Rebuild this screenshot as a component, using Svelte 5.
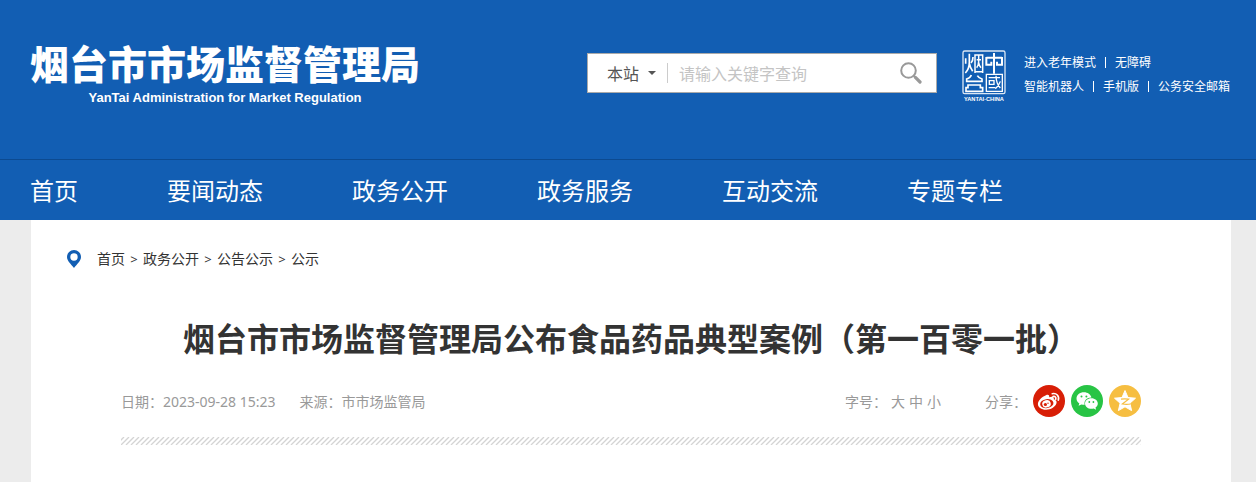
<script>
  const nav = ['首页', '要闻动态', '政务公开', '政务服务', '互动交流', '专题专栏'];
  const crumbs = ['首页', '政务公开', '公告公示', '公示'];
  const tools = [['进入老年模式', '无障碍'], ['智能机器人', '手机版', '公务安全邮箱']];
  const sizes = ['大', '中', '小'];
</script>

<header>
  <div class="top">
    <a class="brand" href="#home">
      <span class="name">烟台市市场监督管理局</span>
      <span class="en">YanTai Administration for Market Regulation</span>
    </a>
    <form class="search" onsubmit={(e) => e.preventDefault()}>
      <select aria-label="搜索范围"><option>本站</option></select>
      <svg class="caret" viewBox="0 0 8 4" aria-hidden="true"><path d="M0 0h8L4 4z" fill="#555" /></svg>
      <input type="text" aria-label="关键字" placeholder="请输入关键字查询" />
      <button type="submit" aria-label="搜索">
        <svg viewBox="0 0 22 22" fill="none" stroke="#999">
          <circle cx="8.5" cy="8.5" r="7.3" stroke-width="2" />
          <path d="M13.8 13.8l1.800 1.800" stroke-width="2" />
          <path d="M15.400 15.400l4.600 4.600" stroke-width="3.200" stroke-linecap="round" />
        </svg>
      </button>
    </form>
    <a class="seal" href="#city" aria-label="烟台">
      <svg viewBox="36 28 132 156" fill="none" stroke="#fff" stroke-width="5">
        <rect x="39" y="31" width="126" height="128" rx="5" stroke-width="4" opacity=".85" />
        <path d="M58 39v26q0 20-12 32M58 68q3 14 10 24M47 53v16M69 49q0 12-6 18" />
        <path d="M75 97V43h23v54M75 93h23M80 57h13M86 45v17q0 12-6 19M86 66q1 9 7 15" stroke-width="4.500" />
        <path d="M64 103q-3 9-14 12v7h46v-7q-10-3-14-10M54 133h37M54 131v10h-6v11h50v-11h-7v-10" />
        <path d="M132 37v62M109 51h47M109 49v23h15v-9M156 49v23h-15v-9" stroke-width="6" />
        <path d="M109 101h48v51h-48zM116 111h34M118 120h14v11h-14zM116 141h20M138 105q1 25 13 37M151 122q-4 13-15 22" stroke-width="4" />
        <text x="102" y="180" text-anchor="middle" fill="#fff" stroke="none" font-family="Liberation Sans, sans-serif" font-weight="bold" font-size="17">YANTAI·CHINA</text>
      </svg>
    </a>
    <div class="tools">
      {#each tools as row}
        <div>
          {#each row as item, i}
            {#if i}<i></i>{/if}<a href="#tool">{item}</a>
          {/each}
        </div>
      {/each}
    </div>
  </div>
  <nav>
    {#each nav as item}<a href="#nav">{item}</a>{/each}
  </nav>
</header>

<main>
  <div class="crumbs">
    <svg viewBox="0 0 14 18" aria-hidden="true"><path fill="#125eb3" fill-rule="evenodd" d="M7 0a7 7 0 0 1 7 7c0 4-4 7-7 11C4 14 0 11 0 7a7 7 0 0 1 7-7zM7 3.300a3.700 3.700 0 1 0 0 7.400a3.700 3.700 0 0 0 0-7.400z" /></svg>
    {#each crumbs as item, i}
      {#if i}<span>&gt;</span>{/if}<a href="#crumb">{item}</a>
    {/each}
  </div>
  <article>
    <h1>烟台市市场监督管理局公布食品药品典型案例（第一百零一批）</h1>
    <div class="meta">
      <span class="date">日期：2023-09-28 15:23</span>
      <span>来源：市市场监管局</span>
      <div class="sizes">
        <span>字号：</span>
        {#each sizes as s}<button>{s}</button>{/each}
      </div>
      <div class="share">
        <span>分享：</span>
        <a href="#weibo" aria-label="微博">
          <svg viewBox="0 0 32 32">
            <circle cx="16" cy="16" r="16" fill="#d81e06" />
            <path fill="#fff" d="M13 10.200c2-.8 3.500-.3 3.200 2 2.600-1 5.300-.7 4.500 2.100 2.600.7 3.500 2.200 2.600 4.500-1.300 3.300-5.500 5.900-10.100 5.900-5 0-8.300-2.600-8.300-5.800 0-3.100 4-7.300 8.100-8.700z" />
            <ellipse cx="13.800" cy="18.600" rx="6.700" ry="4.500" fill="#d81e06" transform="rotate(-8 13.800 18.600)" />
            <ellipse cx="13.500" cy="18.800" rx="4.300" ry="3.700" fill="#fff" transform="rotate(-15 13.500 18.800)" />
            <circle cx="12.400" cy="19.500" r="1.600" fill="#d81e06" />
            <circle cx="15" cy="18.200" r=".7" fill="#d81e06" />
            <path d="M19.300 8.700c4-1 7.300 2.300 6 6.400M20 11.500c2.200-.4 3.300.9 2.700 2.800" fill="none" stroke="#fff" stroke-width="1.700" stroke-linecap="round" />
          </svg>
        </a>
        <a href="#wechat" aria-label="微信">
          <svg viewBox="0 0 32 32">
            <circle cx="16" cy="16" r="16" fill="#28c445" />
            <path fill="#fff" d="M13 7.200c-4.300 0-7.500 2.700-7.500 6.200 0 2 1 3.700 2.800 4.900l-.7 2.500 2.800-1.400c1 .3 2 .4 3.300.4-1.100-4.200 2.400-7.400 6.800-7.200-.8-3.200-3.800-5.400-7.500-5.400z" />
            <path fill="#fff" d="M20.400 13.200c-3.700 0-6.400 2.400-6.400 5.300 0 3 2.800 5.300 6.400 5.300.8 0 1.600-.1 2.300-.4l2.400 1.300-.6-2.200c1.500-1 2.300-2.400 2.300-4 0-2.900-2.800-5.300-6.400-5.300z" />
            <g fill="#28c445"><circle cx="10.500" cy="11.500" r="1" /><circle cx="15.400" cy="11.500" r="1" /><circle cx="18.300" cy="17" r=".9" /><circle cx="22.400" cy="17" r=".9" /></g>
          </svg>
        </a>
        <a href="#qzone" aria-label="QQ空间">
          <svg viewBox="0 0 32 32">
            <circle cx="16" cy="16" r="16" fill="#f6be41" />
            <path fill="#fff" stroke="#fff" stroke-linejoin="round" d="M16 5.500l3 7 7.500.7-5.600 5 1.700 7.400L16 21.800l-6.600 3.800 1.700-7.400-5.600-5 7.500-.7z" />
            <path fill="none" stroke="#f6be41" stroke-width="1.200" d="M12 14.200c3-.5 5.200-.4 7.600 0L13.400 19c3 .5 5.600.4 8.200 0" />
          </svg>
        </a>
      </div>
    </div>
    <svg class="hatch" height="8" aria-hidden="true">
      <defs><pattern id="hatch" width="5" height="8" patternUnits="userSpaceOnUse"><path d="M-10 8l8-8M-5 8l8-8M0 8l8-8M5 8l8-8" stroke="#d4d4d4" stroke-width="1.300" /></pattern></defs>
      <rect width="100%" height="8" fill="url(#hatch)" />
    </svg>
  </article>
</main>

<style>
  :global(body) { margin: 0; background: #ececec; font-family: "Noto Sans", "Noto Sans CJK SC", sans-serif; }
  :global(#app) { min-height: 100vh; display: flex; flex-direction: column; }
  a { color: inherit; text-decoration: none; }
  button, input, select { font: inherit; color: inherit; border: 0; padding: 0; margin: 0; background: none; outline: 0; }
  svg { display: block; }
  header { background: #125eb3; color: #fff; font-family: "Noto Sans CJK SC", sans-serif; }
  .top { display: flex; height: 159px; padding: 0 25px 0 30px; border-bottom: 1px solid #0c4a90; }
  .brand { display: flex; flex-direction: column; align-items: center; padding-top: 36px; }
  .name { font-size: 39px; line-height: 52px; font-weight: 900; white-space: nowrap; }
  .en { font: bold 13px/20px "Liberation Sans", sans-serif; }
  .search { display: flex; align-items: center; box-sizing: border-box; width: 350px; height: 40px; margin: 53px 25px 0 auto; padding: 0 14px 0 19px; background: #fff; border: 1px solid #aaa; color: #555; font-size: 16px; }
  select { appearance: none; width: 41px; }
  .caret { width: 8px; height: 4px; }
  input { flex: 1; min-width: 0; margin-left: 11px; padding-left: 11px; height: 20px; border-left: 1px solid #ccc; line-height: 20px; }
  input::placeholder { color: #c4c4c4; opacity: 1; }
  button { cursor: pointer; }
  .search svg { flex: none; }
  .search button svg { width: 22px; height: 22px; }
  .seal { margin-top: 50px; }
  .seal svg { width: 44px; height: 52px; }
  .tools { width: 207px; margin: 50px 0 0 18px; font-size: 12px; line-height: 24px; white-space: nowrap; }
  .tools div { display: flex; align-items: center; }
  .tools i { width: 1px; height: 11px; margin: 0 9px; background: #fff; }
  nav { display: flex; gap: 89px; height: 60px; padding-left: 30px; font-size: 24px; line-height: 60px; }
  main { flex: 1; margin: 0 25px 0 31px; background: #fff; }
  .crumbs { display: flex; align-items: center; padding: 29px 36px 0; font-size: 14px; line-height: 20px; color: #333; }
  .crumbs svg { width: 14px; height: 18px; margin-right: 16px; }
  .crumbs span { width: 18px; text-align: center; font-size: 13px; }
  article { padding: 0 90px; }
  h1 { margin: 44px 0 0; font-size: 32px; line-height: 48px; text-align: center; white-space: nowrap; color: #333; font-family: "Noto Sans CJK SC", sans-serif; }
  .meta { display: flex; align-items: center; height: 32px; margin-top: 24px; font-size: 14px; color: #999; }
  .date { margin-right: 24px; }
  .sizes { display: flex; gap: 4px; margin-left: auto; margin-right: 44px; }
  .share { display: flex; align-items: center; gap: 6px; }
  .share svg { width: 32px; height: 32px; }
  .hatch { width: 100%; margin-top: 20px; }
</style>
